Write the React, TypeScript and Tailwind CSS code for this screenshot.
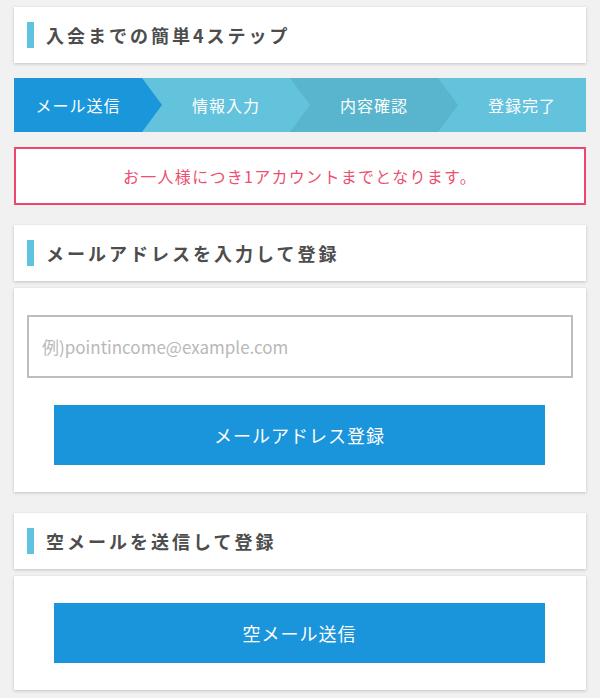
const steps = [
  { label: "メール送信", box: "w-[128px] bg-[#1a96db]", arrow: "after:border-l-[#1a96db]" },
  { label: "情報入力", box: "w-[148px] pl-[20px] bg-[#63c2dc]", arrow: "after:border-l-[#63c2dc]" },
  { label: "内容確認", box: "w-[148px] pl-[20px] bg-[#58b5cd]", arrow: "after:border-l-[#58b5cd]" },
  { label: "登録完了", box: "w-[148px] pl-[20px] bg-[#63c2dc]", arrow: "" },
];

function SectionTitle({ text }: { text: string }) {
  return (
    <div className="bg-white h-[56px] flex items-center px-[13px] shadow-[0_1px_3px_rgba(0,0,0,0.2)]">
      <span className="block w-[7px] h-[26px] bg-[#5fc3df]" />
      <h2 className="ml-[12px] text-[18px] font-bold tracking-[3px] text-[#4d4d4d]">{text}</h2>
    </div>
  );
}

export default function App() {
  return (
    <div
      className="min-h-[698px] bg-[#f1f1f1] px-[14px] pt-[7px] pb-[9px]"
      style={{ fontFamily: '"Noto Sans CJK JP", "Noto Sans", sans-serif' }}
    >
      <SectionTitle text="入会までの簡単4ステップ" />

      <div className="mt-[15px] flex h-[54px] overflow-hidden bg-[#63c2dc]">
        {steps.map((s, i) => (
          <div
            key={s.label}
            className={`relative shrink-0 h-full flex items-center justify-center text-white text-[16px] tracking-[1px] ${s.box} ${
              i < 3
                ? `after:content-[''] after:absolute after:left-full after:top-0 after:z-10 after:border-l-[20px] after:border-y-[27px] after:border-y-transparent ${s.arrow}`
                : ""
            }`}
          >
            {s.label}
          </div>
        ))}
      </div>

      <div className="mt-[15px] h-[58px] bg-white border-2 border-[#f0456a] flex items-center justify-center text-[16px] tracking-[1.3px] text-[#ee4f6f]">
        お一人様につき1アカウントまでとなります。
      </div>

      <div className="mt-[20px]">
        <SectionTitle text="メールアドレスを入力して登録" />
      </div>

      <div className="mt-[7px] bg-white px-[13px] py-[27px] shadow-[0_1px_3px_rgba(0,0,0,0.2)]">
        <input
          type="email"
          placeholder="例)pointincome@example.com"
          className="block w-full h-[63px] border-2 border-[#bdbdbd] px-[13px] text-[17px] text-[#333] placeholder:text-[#b8b8b8] outline-none"
        />
        <button
          type="button"
          className="block mx-[27px] mt-[27px] w-[491px] h-[60px] bg-[#1a94da] text-white text-[18px] tracking-[1px]"
        >
          メールアドレス登録
        </button>
      </div>

      <div className="mt-[21px]">
        <SectionTitle text="空メールを送信して登録" />
      </div>

      <div className="mt-[7px] bg-white px-[13px] py-[27px] shadow-[0_1px_3px_rgba(0,0,0,0.2)]">
        <button
          type="button"
          className="block mx-[27px] w-[491px] h-[60px] bg-[#1a94da] text-white text-[18px] tracking-[1px]"
        >
          空メール送信
        </button>
      </div>
    </div>
  );
}
